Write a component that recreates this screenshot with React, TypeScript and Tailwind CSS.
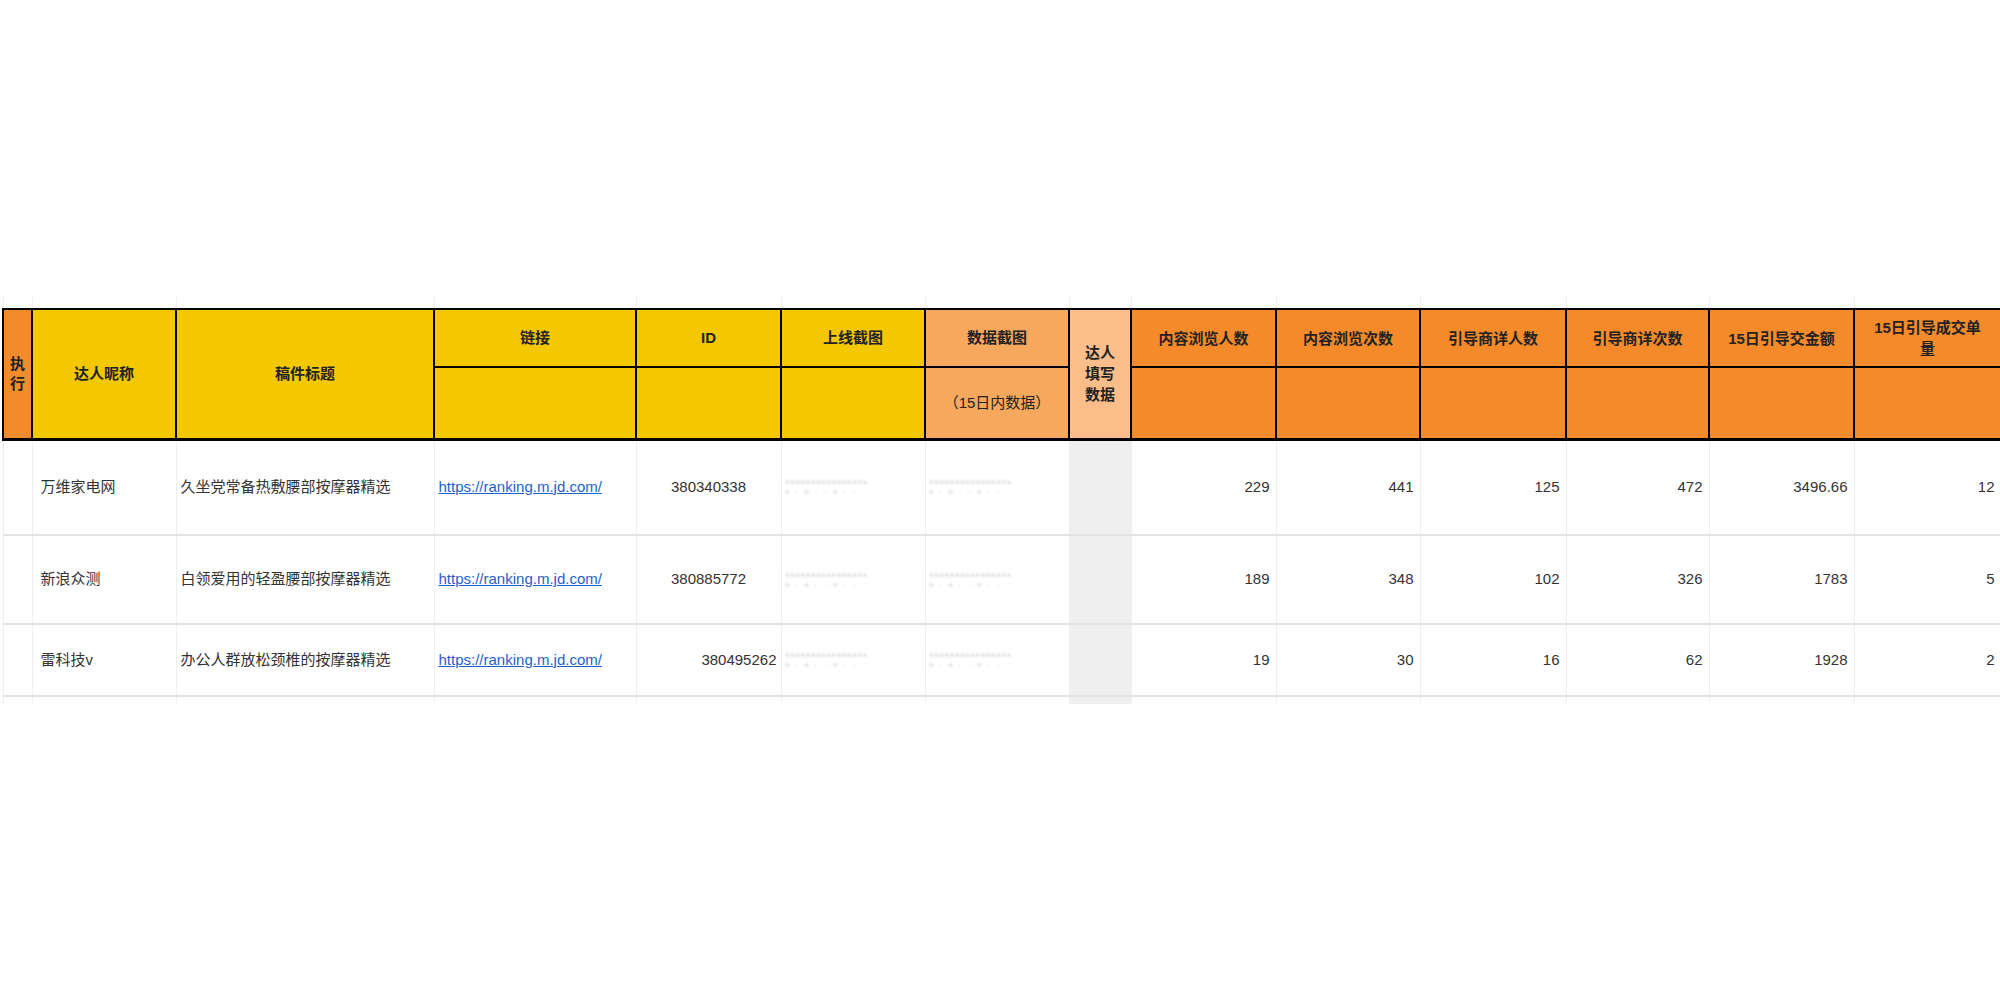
import React from 'react';

const widths = [29, 144, 258, 202, 145, 144, 144, 62, 145, 144, 146, 143, 145, 147];

const rows = [
  { name: '万维家电网', title: '久坐党常备热敷腰部按摩器精选', id: '380340338', idAlign: 'text-center', nums: ['229', '441', '125', '472', '3496.66', '12'], h: 'h-[96px]' },
  { name: '新浪众测', title: '白领爱用的轻盈腰部按摩器精选', id: '380885772', idAlign: 'text-center', nums: ['189', '348', '102', '326', '1783', '5'], h: 'h-[89px]' },
  { name: '雷科技v', title: '办公人群放松颈椎的按摩器精选', id: '380495262', idAlign: 'text-right pr-1', nums: ['19', '30', '16', '62', '1928', '2'], h: 'h-[72px]' },
];

const metrics = ['内容浏览人数', '内容浏览次数', '引导商详人数', '引导商详次数', '15日引导交金额', '15日引导成交单量'];

const hd = 'border-2 border-black font-bold text-[15px] text-[#222] text-center align-middle';
const td = 'border-x border-[#eeeeee] border-b-2 border-b-[#e3e3e3] text-[15px] text-[#333] align-middle';

const Blur: React.FC = () => (
  <div className="blur-[1.5px] text-[9px] leading-[10px] text-[#b8b8b8] tracking-[2px] whitespace-nowrap overflow-hidden px-1">
    <div>▪▪▪▪▪▪▪▪▪▪▪▪▪▪▪▪</div>
    <div>▪ · ▪ · · ▪ · ·</div>
  </div>
);

export default function App() {
  return (
    <div className="w-[2000px] h-[1000px] bg-white pt-[295px]" style={{ fontFamily: '"Liberation Sans", "Noto Sans CJK SC", sans-serif' }}>
      <table className="border-collapse table-fixed ml-[2px]" style={{ width: 1996 }}>
        <colgroup>
          {widths.map((w, i) => <col key={i} style={{ width: w }} />)}
        </colgroup>
        <tbody>
          <tr className="h-[14px]">
            {widths.map((_, i) => <td key={i} className="border-x border-[#f0f0f0]" />)}
          </tr>
          <tr className="h-[58px]">
            <td rowSpan={2} className={`${hd} bg-[#f28b2c] leading-[20px] px-0`}>执<br />行</td>
            <td rowSpan={2} className={`${hd} bg-[#f4c800]`}>达人昵称</td>
            <td rowSpan={2} className={`${hd} bg-[#f4c800]`}>稿件标题</td>
            <td className={`${hd} bg-[#f4c800]`}>链接</td>
            <td className={`${hd} bg-[#f4c800]`}>ID</td>
            <td className={`${hd} bg-[#f4c800]`}>上线截图</td>
            <td className={`${hd} bg-[#f5a85e]`}>数据截图</td>
            <td rowSpan={2} className={`${hd} bg-[#fbbd8a] leading-[21px]`}>达人<br />填写<br />数据</td>
            {metrics.map((m) => (
              <td key={m} className={`${hd} bg-[#f58a2b] leading-[21px] px-3`}>{m}</td>
            ))}
          </tr>
          <tr className="h-[72px] border-b-[3px] border-black">
            <td className={`${hd} bg-[#f4c800]`} />
            <td className={`${hd} bg-[#f4c800]`} />
            <td className={`${hd} bg-[#f4c800]`} />
            <td className={`${hd} bg-[#f5a85e] font-normal`}>（15日内数据）</td>
            {metrics.map((m) => <td key={m} className={`${hd} bg-[#f58a2b]`} />)}
          </tr>
          {rows.map((r) => (
            <tr key={r.id} className={r.h}>
              <td className={td} />
              <td className={`${td} px-2`}>{r.name}</td>
              <td className={`${td} pl-1 whitespace-nowrap overflow-hidden`}>{r.title}</td>
              <td className={`${td} px-1`}>
                <span className="text-[#1f5fc9] underline whitespace-nowrap">https://ranking.m.jd.com/</span>
              </td>
              <td className={`${td} ${r.idAlign}`}>{r.id}</td>
              <td className={td}><Blur /></td>
              <td className={td}><Blur /></td>
              <td className={`${td} bg-[#efefef]`} />
              {r.nums.map((n, i) => (
                <td key={i} className={`${td} text-right pr-[6px]`}>{n}</td>
              ))}
            </tr>
          ))}
          <tr className="h-[8px]">
            {widths.map((_, i) => <td key={i} className={`border-x border-[#f0f0f0] ${i === 7 ? 'bg-[#efefef]' : ''}`} />)}
          </tr>
        </tbody>
      </table>
    </div>
  );
}
